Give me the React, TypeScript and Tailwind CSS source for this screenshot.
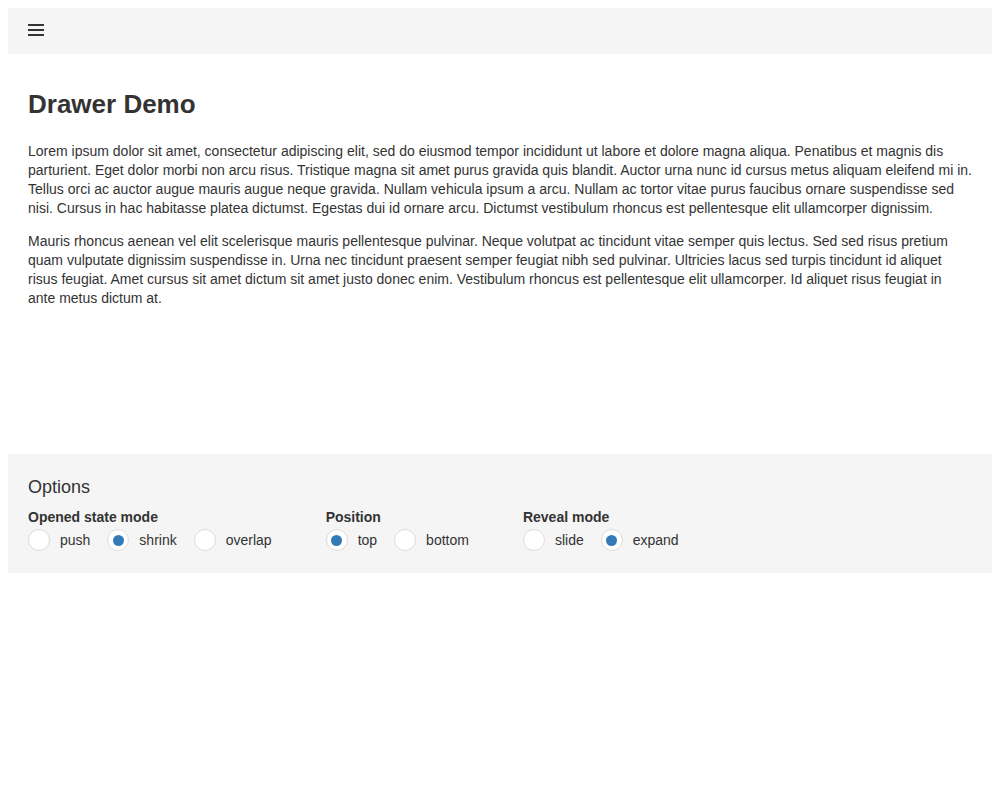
import { useState } from "react"

type Group = {
	label: string
	options: string[]
	value: string
}

const groups: Group[] = [
	{ label: "Opened state mode", options: ["push", "shrink", "overlap"], value: "shrink" },
	{ label: "Position", options: ["top", "bottom"], value: "top" },
	{ label: "Reveal mode", options: ["slide", "expand"], value: "expand" },
]

const MenuIcon = () => (
	<svg width="18" height="14" viewBox="0 0 18 14" className="mb-[2px] block">
		<rect x="1" y="1" width="16" height="2" fill="#333" />
		<rect x="1" y="6" width="16" height="2" fill="#333" />
		<rect x="1" y="11" width="16" height="2" fill="#333" />
	</svg>
)

const RadioGroup = ({ group }: { group: Group }) => {
	const [value, setValue] = useState(group.value)

	return (
		<div className="flex flex-col">
			<div className="text-[14px] leading-[17px] font-bold text-[#333]">{group.label}</div>
			<div className="mt-[3px] flex items-center">
				{group.options.map((option) => (
					<button
						key={option}
						type="button"
						onClick={() => setValue(option)}
						className="mr-[17px] flex items-center last:mr-0"
					>
						<span className="flex h-[22px] w-[22px] items-center justify-center rounded-full border border-[#ddd] bg-white">
							{value === option && <span className="h-[11px] w-[11px] rounded-full bg-[#337ab7]" />}
						</span>
						<span className="pl-[10px] text-[14px] leading-[17px] text-[#333]">{option}</span>
					</button>
				))}
			</div>
		</div>
	)
}

export default function App() {
	return (
		<div className="min-h-[800px] bg-white p-[8px] font-['Liberation_Sans',Arial,sans-serif] text-[#333]">
			<div className="flex h-[46px] items-center bg-[#f5f5f5] px-[19px]">
				<MenuIcon />
			</div>
			<div className="h-[400px] px-[20px] pt-[35px]">
				<h2 className="text-[26px] leading-[30px] font-bold">Drawer Demo</h2>
				<p className="mt-[23px] text-[14px] leading-[19px]">
					Lorem ipsum dolor sit amet, consectetur adipiscing elit, sed do eiusmod tempor incididunt ut labore et
					dolore magna aliqua. Penatibus et magnis dis parturient. Eget dolor morbi non arcu risus. Tristique magna
					sit amet purus gravida quis blandit. Auctor urna nunc id cursus metus aliquam eleifend mi in. Tellus orci ac
					auctor augue mauris augue neque gravida. Nullam vehicula ipsum a arcu. Nullam ac tortor vitae purus
					faucibus ornare suspendisse sed nisi. Cursus in hac habitasse platea dictumst. Egestas dui id ornare arcu.
					Dictumst vestibulum rhoncus est pellentesque elit ullamcorper dignissim.
				</p>
				<p className="mt-[14px] text-[14px] leading-[19px]">
					Mauris rhoncus aenean vel elit scelerisque mauris pellentesque pulvinar. Neque volutpat ac tincidunt vitae
					semper quis lectus. Sed sed risus pretium quam vulputate dignissim suspendisse in. Urna nec tincidunt
					praesent semper feugiat nibh sed pulvinar. Ultricies lacus sed turpis tincidunt id aliquet risus feugiat.
					Amet cursus sit amet dictum sit amet justo donec enim. Vestibulum rhoncus est pellentesque elit
					ullamcorper. Id aliquet risus feugiat in ante metus dictum at.
				</p>
			</div>
			<div className="bg-[#f5f5f5] px-[20px] pt-[22px] pb-[22px]">
				<div className="text-[18px] leading-[22px]">Options</div>
				<div className="mt-[11px] flex gap-[54px]">
					{groups.map((group) => (
						<RadioGroup key={group.label} group={group} />
					))}
				</div>
			</div>
		</div>
	)
}
